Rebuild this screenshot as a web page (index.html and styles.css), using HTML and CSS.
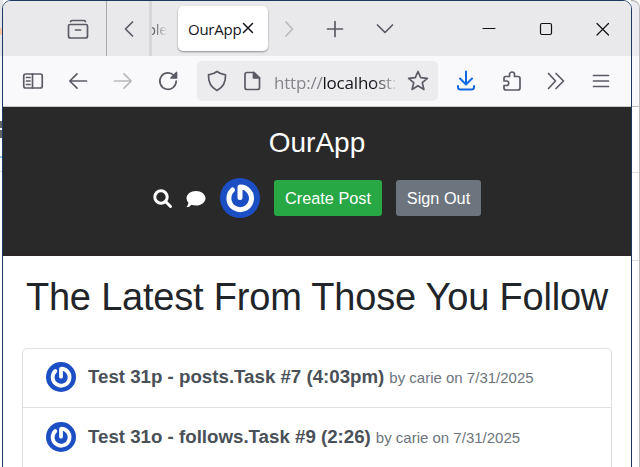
FILE: index.html
```html
<!DOCTYPE html>
<html lang="en">
<head>
<meta charset="utf-8">
<title>OurApp</title>
<link rel="stylesheet" href="styles.css">
</head>
<body>
<svg class="defs" width="0" height="0">
  <symbol id="power" viewBox="0 0 40 40">
    <circle cx="20" cy="20" r="20" fill="#1c4ec4"/>
    <path d="M12.500 12A11.300 11.300 0 1 0 20 9V19.500" fill="none" stroke="#fff" stroke-width="5" stroke-linecap="round" stroke-linejoin="round"/>
  </symbol>
</svg>
<div class="behind">
  <div class="edge left"><i class="orange"></i><i class="dark"></i><i class="dark short"></i><i class="blue"></i><i class="rule"></i></div>
  <div class="edge right"><i class="rule"></i><i class="rule low"></i></div>
</div>
<div class="window">
  <div class="tabs">
    <div class="archive"><svg width="24" height="24" viewBox="0 0 24 24"><path d="M4.500 4.500Q5 3.500 6.500 3.500H17.500Q19 3.500 19.500 4.500M4 7.500H20Q21.500 7.500 21.500 9V19Q21.500 21 19.500 21H4.500Q2.500 21 2.500 19V9Q2.500 7.500 4 7.500ZM9.500 13H14.500"/></svg></div>
    <div class="scroll"><svg width="24" height="24" viewBox="0 0 24 24"><path d="M15.500 5L8.500 12L15.500 19"/></svg></div>
    <div class="clipped"><span>ole</span></div>
    <div class="tab"><span>OurApp</span><svg width="12" height="12" viewBox="0 0 12 12"><path d="M1.500 1.500L10.500 10.500M10.500 1.500L1.500 10.500"/></svg></div>
    <div class="tools">
      <svg class="faint" width="24" height="24" viewBox="0 0 24 24"><path d="M9 5L15.500 12L9 19"/></svg>
      <svg width="24" height="24" viewBox="0 0 24 24"><path d="M12 4.500V19.500M4.500 12H19.500"/></svg>
      <svg width="24" height="24" viewBox="0 0 24 24"><path d="M4.500 8L12 15.500L19.500 8"/></svg>
    </div>
    <div class="controls">
      <svg width="14" height="14" viewBox="0 0 14 14"><path d="M1 6.500H13"/></svg>
      <svg width="14" height="14" viewBox="0 0 14 14"><rect x="1.500" y="1.500" width="11" height="11" rx="1.500"/></svg>
      <svg width="14" height="14" viewBox="0 0 14 14"><path d="M1 1.500L12.500 13M12.500 1.500L1 13"/></svg>
    </div>
  </div>
  <div class="toolbar">
    <div class="nav">
      <svg width="24" height="24" viewBox="0 0 24 24"><rect x="2.750" y="5" width="18.500" height="14" rx="2"/><path d="M11.500 5V19M5.500 8.500H9M5.500 12H9M5.500 15.500H9"/></svg>
      <svg width="24" height="24" viewBox="0 0 24 24"><path d="M20.500 12H4M11 4.800L3.800 12L11 19.200"/></svg>
      <svg class="faint" width="24" height="24" viewBox="0 0 24 24"><path d="M3.500 12H20M13 4.800L20.200 12L13 19.200"/></svg>
      <svg width="24" height="24" viewBox="0 0 24 24"><path d="M18 6.500A8.200 8.200 0 1 0 20.200 12"/><path class="solid" d="M20.500 3.500V9H15Z"/></svg>
    </div>
    <div class="url">
      <svg width="24" height="24" viewBox="0 0 24 24"><path d="M12 2.500Q15 5 20.500 5.800Q21 17 12 21.500Q3 17 3.500 5.800Q9 5 12 2.500Z"/></svg>
      <svg width="24" height="24" viewBox="0 0 24 24"><path d="M7 3.500H14L19.500 9V18.500Q19.500 20.500 17.500 20.500H7Q5 20.500 5 18.500V5.500Q5 3.500 7 3.500Z"/><path class="solid" d="M13.500 3.500V9H19.500Z"/></svg>
      <div class="address"><span>http://</span>localhost:3</div>
      <svg width="24" height="24" viewBox="0 0 24 24"><path d="M12 2.500L14.700 8.700L21.400 9.300L16.300 13.700L17.900 20.400L12 16.800L6.100 20.400L7.700 13.700L2.600 9.300L9.300 8.700Z"/></svg>
    </div>
    <div class="actions">
      <svg class="download" width="24" height="24" viewBox="0 0 24 24"><path d="M12 2.500V15M6 9.500L12 15.500L18 9.500M4 17V18Q4 20.500 6.500 20.500H17.500Q20 20.500 20 18V17"/></svg>
      <svg width="24" height="24" viewBox="0 0 24 24"><path d="M5.500 7.500H9.500V5.500A2.500 2.500 0 0 1 14.500 5.500V7.500H18Q20 7.500 20 9.500V19Q20 21 18 21H6Q4 21 4 19V16.500H6.500A2.250 2.250 0 0 0 6.500 12H4V9Q4 7.500 5.500 7.500Z"/></svg>
      <svg width="24" height="24" viewBox="0 0 24 24"><path d="M4.500 4.500L11.500 12L4.500 19.500M12 4.500L19.500 12L12 19.500"/></svg>
      <svg width="24" height="24" viewBox="0 0 24 24"><path d="M4.500 6.500H19.500M4.500 12H19.500M4.500 17.500H19.500"/></svg>
    </div>
  </div>
  <header class="header">
    <h4>OurApp</h4>
    <div class="menu">
      <svg class="search" width="20" height="20" viewBox="0 0 20 20"><circle cx="8" cy="8" r="6.200"/><path d="M13 13L17.500 17.500"/></svg>
      <svg class="chat" width="20" height="20" viewBox="0 0 20 20"><path d="M10 2C15.200 2 19.500 5.200 19.500 9.300S15.200 16.600 10 16.600Q7.500 16.600 5.500 15.800Q3.300 18.300 .5 18.300Q2 16.300 2.500 13.800Q.5 11.800 .5 9.300C.5 5.200 4.800 2 10 2Z"/></svg>
      <svg class="avatar" width="40" height="40"><use href="#power"/></svg>
      <button class="btn create">Create Post</button>
      <button class="btn out">Sign Out</button>
    </div>
  </header>
  <main class="page">
    <h2>The Latest From Those You Follow</h2>
    <div class="list">
      <a class="item"><svg width="30" height="30"><use href="#power"/></svg><strong>Test 31p - posts.Task #7 (4:03pm)</strong><small>by carie on 7/31/2025</small></a>
      <a class="item"><svg width="30" height="30"><use href="#power"/></svg><strong>Test 31o - follows.Task #9 (2:26)</strong><small>by carie on 7/31/2025</small></a>
    </div>
  </main>
</div>
</body>
</html>
```

FILE: styles.css
```css
* { box-sizing: border-box; }
body { margin: 0; width: 640px; height: 467px; overflow: hidden; position: relative; background: #fff; font-family: "Liberation Sans", Arial, sans-serif; }
svg { display: block; flex: none; fill: none; stroke: #5b5b66; stroke-width: 1.7; stroke-linecap: round; stroke-linejoin: round; }
use { stroke: none; }
.defs { position: absolute; }
.faint { stroke: #b9b9be; }

.behind { position: absolute; inset: 0; display: flex; justify-content: space-between; }
.edge { position: relative; }
.edge i { position: absolute; left: 0; width: 100%; }
.edge.left { width: 3px; background: linear-gradient(#e5e5e9 56px, #f7f7f9 56px, #f7f7f9 106px, #fff 106px); }
.edge.right { width: 9px; border-right: 1px solid #bbb; border-top: 1px solid #aaa; border-top-right-radius: 8px; background: linear-gradient(#ededf1 55px, #f9f9fb 55px, #f9f9fb 105px, #bbb 105px, #bbb 106px, #fff 106px); }
.edge .orange { top: 28px; height: 7px; background: #f1c5a5; }
.edge .dark { top: 121px; height: 7px; background: #666; }
.edge .short { top: 130px; height: 8px; }
.edge .blue { top: 156px; height: 2px; background: #9cc7e7; }
.edge .rule { top: 171px; height: 1px; background: #ddd; }
.edge .low { top: 259px; }

.window { position: relative; width: 630px; height: 480px; margin-left: 2px; border: 1px solid #1e3a63; border-radius: 9px; overflow: hidden; background: #fff; }
.tabs { display: flex; height: 55px; background: #e9e9eb; }
.archive { width: 104px; padding: 16px 0 0 63px; border-right: 1px solid #aaaab0; }
.scroll { width: 42px; padding: 16px 0 0 10px; }
.clipped { width: 29px; border-left: 3px solid #d7d7da; overflow: hidden; font: 15px/57px "Open Sans", sans-serif; letter-spacing: -.3px; color: #666; }
.clipped span { display: block; width: 15px; overflow: hidden; text-indent: -5px; -webkit-mask: linear-gradient(90deg, #000 20%, transparent); mask: linear-gradient(90deg, #000 20%, transparent); }
.tab { display: flex; align-items: center; justify-content: space-between; width: 90px; height: 45px; margin-top: 5px; padding: 0 14px 0 10px; border-radius: 5px; background: #fff; box-shadow: 0 1px 2px #0006; font: 15px "Open Sans", sans-serif; letter-spacing: -.25px; color: #15141a; }
.tab span { padding-top: 1px; }
.tab svg { margin-bottom: 1px; stroke: #15141a; stroke-width: 1.5; }
.tools { display: grid; grid-template-columns: 46px 50px 24px; padding: 16px 0 0 9px; }
.controls { display: flex; gap: 43px; margin-left: auto; padding: 21px 21.500px 0 0; }
.controls svg { stroke: #111; stroke-width: 1.2; }

.toolbar { display: flex; height: 51px; background: #f9f9fb; border-bottom: 1px solid #c8c8ca; }
.nav { display: flex; gap: 21px; width: 194px; padding: 13px 0 0 18px; }
.nav .solid, .url .solid { fill: #5b5b66; }
.url { display: flex; width: 241px; height: 40px; margin-top: 5px; padding: 8px 8px 0 8px; border-radius: 5px; background: #ececee; }
.url svg + svg { margin-left: 11px; }
.address { flex: 1; margin-left: 10px; margin-right: 8px; overflow: hidden; white-space: nowrap; font: 17px/28px "Open Sans", sans-serif; letter-spacing: -.2px; color: #15141a; -webkit-mask: linear-gradient(90deg, #000 80%, transparent); mask: linear-gradient(90deg, #000 80%, transparent); }
.address span { color: #85858b; }
.actions { display: grid; grid-template-columns: 46px 44px 45px 24px; padding: 13px 0 0 15.500px; }
.actions .download { stroke: #1269e0; stroke-width: 2; }

.header { height: 149px; padding-top: 19px; background: #292929; border-bottom: 3px solid #2a2526; color: #fff; }
h4 { margin: 0; font-size: 28px; line-height: 34px; font-weight: 400; text-align: center; }
.menu { display: flex; align-items: center; height: 40px; margin-top: 18px; padding-left: 150px; }
.search { stroke: #fff; stroke-width: 3; margin-top: 2px; }
.chat { fill: #fff; stroke: none; margin: 2px 0 0 13px; }
.avatar { margin: 0 14px 0 14px; }
.btn { height: 36px; padding: 0; border: 0; border-radius: 3px; font: 16.3px "Liberation Sans", Arial, sans-serif; color: #fff; }
.create { width: 108px; background: #28a745; }
.out { width: 85px; margin-left: 14px; background: #6c757d; }

.page { padding: 18px 19px 0; }
h2 { margin: 0; font-size: 38px; line-height: 46px; font-weight: 400; letter-spacing: -.2px; text-align: center; white-space: nowrap; color: #212529; }
.list { margin-top: 28px; height: 180px; border: 1px solid #dfdfdf; border-radius: 5px; }
.item { display: flex; align-items: center; height: 59px; padding: 0 0 2px 23px; border-bottom: 1px solid #dfdfdf; white-space: nowrap; color: #495057; }
.item + .item { height: 61px; }
.item strong { margin: -1px 0 0 12px; font-size: 18.700px; }
.item small { margin: 1px 0 0 5px; font-size: 15px; color: #6c757d; }
```
